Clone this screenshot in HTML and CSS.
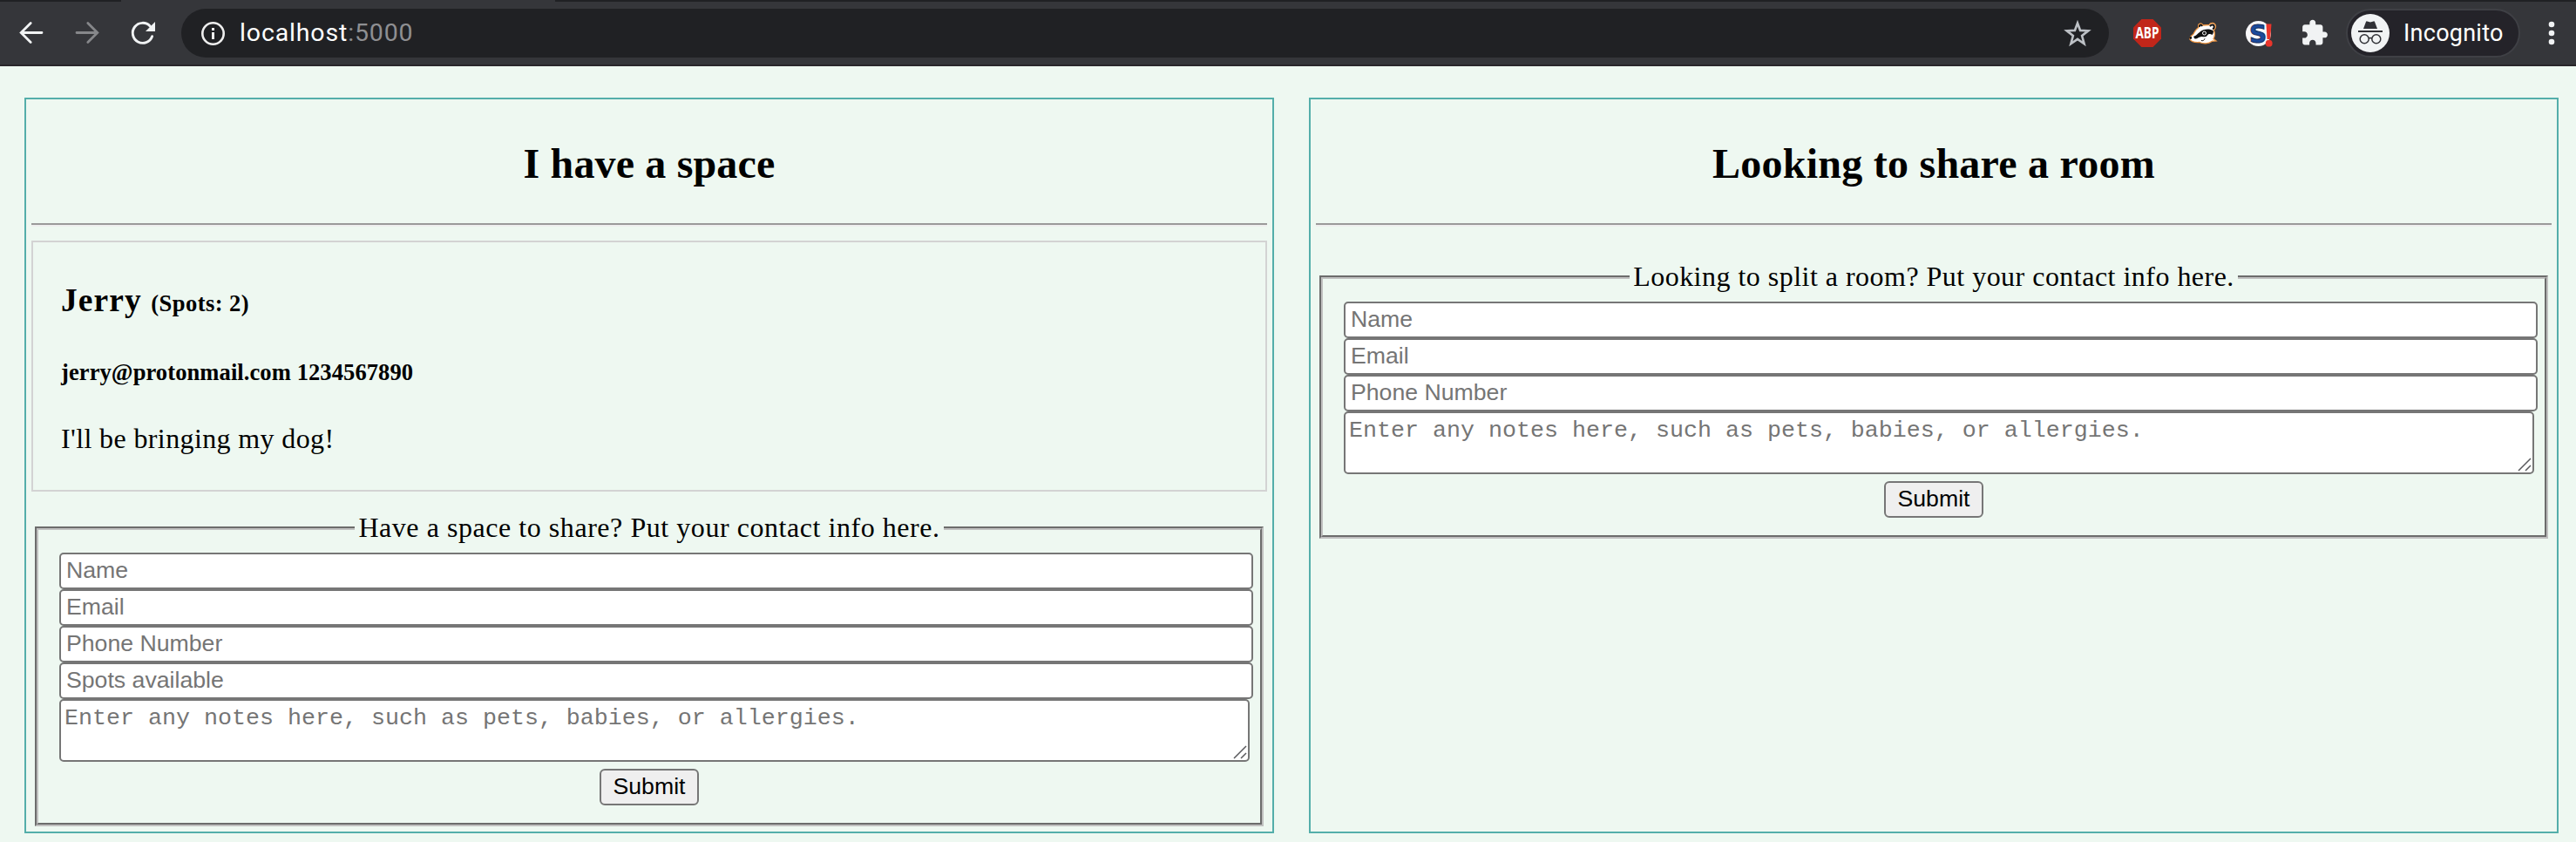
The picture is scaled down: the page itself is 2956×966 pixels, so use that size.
FILE: index.html
```html
<!DOCTYPE html>
<html lang="en">
<head>
<meta charset="utf-8">
<title>Room share</title>
<link rel="stylesheet" href="styles.css">
</head>
<body>
<header class="browser">
  <div class="tabstrip"><span class="tab-active"></span></div>
  <div class="toolbar">
    <nav class="nav">
      <svg class="icon" viewBox="0 0 32 32"><path d="M28 15.5H4.5M15.2 4.5 4.2 15.5l11 11" fill="none" stroke="#f1f3f4" stroke-width="2.8" stroke-linecap="round"/></svg>
      <svg class="icon" viewBox="0 0 32 32"><path d="M4 15.5h23.5M16.8 4.5l11 11-11 11" fill="none" stroke="#86878a" stroke-width="2.8" stroke-linecap="round"/></svg>
      <svg class="icon" viewBox="0 0 32 32"><path d="M26.6 19.7A11.5 11.5 0 1 1 24.2 8" fill="none" stroke="#f1f3f4" stroke-width="2.9" stroke-linecap="round"/><path d="M30 3v11H19z" fill="#f1f3f4"/></svg>
    </nav>
    <div class="omnibox">
      <svg class="icon" viewBox="0 0 32 32"><circle cx="16.500" cy="16.500" r="12.200" fill="none" stroke="#eeeeee" stroke-width="2.600"/><path d="M15 10h3v3h-3zM15 15h3v8h-3z" fill="#eeeeee"/></svg>
      <span class="url"><span class="host">localhost</span><span class="port">:5000</span></span>
      <svg class="icon star" viewBox="0 0 32 32"><path d="m16 4.500 3.100 8.400 9.200.4-7.200 5.700 2.500 9.200-7.600-5.300-7.600 5.300 2.500-9.200-7.200-5.700 9.200-.4z" fill="none" stroke="#bdc1c6" stroke-width="2.600"/></svg>
    </div>
    <div class="extensions">
      <svg class="icon" viewBox="0 0 32 32"><path d="M9.400 0h13.200L32 9.400v13.200L22.600 32H9.400L0 22.600V9.400z" fill="#c1261a"/><text x="16" y="22" class="abp" text-anchor="middle" textLength="27" lengthAdjust="spacingAndGlyphs">ABP</text></svg>
      <svg class="icon" viewBox="0 0 32 32">
        <path d="M11 9.500C9.500 5 13.500 3.500 16 7l7-.5c2-3 6.500-2.500 7.300.5.600 2.300-.8 4.500-2 5.500 1.500 3.500 1.300 7-.3 10l3 2.500-4.500.2C22 28.500 16 28.500 12 26.500 7 26.800 2.500 26 1 23.300c-1-2.800 2-4.600 3.800-6 1.700-3.300 3.200-6 6.200-7.800z" fill="#fff" stroke="#ee9440" stroke-width="1.300"/>
        <path d="M12 8.800c-.3-2.800 2-2.800 3-.6M24 8.300c1.700-2.800 4.800-2 4.800.4 0 1.400-1 2.300-1.800 2.600" fill="none" stroke="#111" stroke-width="2"/>
        <path d="M5 20c4.500-1.500 7-6.500 11.500-7.800 4.500-1.200 8.500-.6 11.300 1 .3 2-.3 3.600-1.300 4.800-2-1.400-4-1.500-5.500.5-2 2.700-4.500 1.700-6.500 1.500-3.500 0-5 3-8 2.500z" fill="#111"/>
        <circle cx="1.800" cy="21.500" r="1.400" fill="#111"/>
        <circle cx="17.500" cy="16" r="2" fill="#111" stroke="#fff" stroke-width="1"/>
        <path d="M14 24.500c1.800.7 3.500-.3 4-2.200" fill="none" stroke="#111"/>
      </svg>
      <svg class="icon" viewBox="0 0 32 32"><circle cx="15.500" cy="16.500" r="14.500" fill="#f8f8fa"/><text x="15" y="26.500" class="s-mark" text-anchor="middle">S</text><path d="M24.500 5.500h6l-1.300 17.500h-3.700z" fill="#e9352b"/><circle cx="27.700" cy="27.700" r="3.900" fill="#e9352b"/></svg>
      <svg class="icon" viewBox="0 0 32 32"><path transform="translate(-.6 -.6) scale(1.370)" d="M20.500 11H19V7c0-1.100-.9-2-2-2h-4V3.500C13 2.120 11.880 1 10.500 1S8 2.120 8 3.500V5H4c-1.100 0-1.990.9-1.990 2v3.800H3.500c1.490 0 2.700 1.210 2.700 2.700s-1.210 2.700-2.700 2.700H2V20c0 1.100.9 2 2 2h3.800v-1.500c0-1.490 1.210-2.700 2.700-2.700 1.490 0 2.700 1.210 2.700 2.700V22H17c1.100 0 2-.9 2-2v-4h1.500c1.380 0 2.500-1.120 2.500-2.500S21.880 11 20.500 11z" fill="#f1f3f4"/></svg>
    </div>
    <div class="profile">
      <svg class="avatar" viewBox="0 0 44 44"><circle cx="22" cy="22" r="22" fill="#f1f3f4"/><path d="M8 19h28v2H8zM14 17l3-8q.4-1 1.400-.6l3.600 1 3.600-1q1-.4 1.400.6l3 8z" fill="#303136"/><g fill="none" stroke="#303136" stroke-width="1.500"><circle cx="15.200" cy="28.700" r="5"/><circle cx="28.800" cy="28.700" r="5"/><path d="M20.200 28q1.800-1 3.600 0"/></g></svg>
      <span class="profile-name">Incognito</span>
    </div>
    <svg class="icon menu" viewBox="0 0 32 32"><g fill="#f1f3f4"><circle cx="16" cy="6" r="3.300"/><circle cx="16" cy="16" r="3.300"/><circle cx="16" cy="26" r="3.300"/></g></svg>
  </div>
</header>

<main class="board">
  <section class="panel">
    <h2 class="panel-title">I have a space</h2>
    <hr class="rule">
    <article class="card">
      <h3 class="card-name">Jerry <span class="spots">(Spots: 2)</span></h3>
      <h5 class="card-contact">jerry@protonmail.com 1234567890</h5>
      <p class="card-note">I'll be bringing my dog!</p>
    </article>
    <fieldset class="form form-space">
      <legend class="legend legend-space">Have a space to share? Put your contact info here.</legend>
      <div class="fields">
        <input class="field" type="text" placeholder="Name">
        <input class="field" type="text" placeholder="Email">
        <input class="field" type="text" placeholder="Phone Number">
        <input class="field" type="text" placeholder="Spots available">
        <div class="notes-wrap">
          <textarea class="notes" placeholder="Enter any notes here, such as pets, babies, or allergies."></textarea>
          <svg class="grip" viewBox="0 0 16 16"><path d="M1 15 15 1M9 15l6-6" fill="none" stroke="#58595c" stroke-width="1.500"/></svg>
        </div>
      </div>
      <div class="actions"><button class="submit" type="button">Submit</button></div>
    </fieldset>
  </section>

  <section class="panel">
    <h2 class="panel-title title-room">Looking to share a room</h2>
    <hr class="rule">
    <fieldset class="form form-room">
      <legend class="legend legend-room">Looking to split a room? Put your contact info here.</legend>
      <div class="fields">
        <input class="field" type="text" placeholder="Name">
        <input class="field" type="text" placeholder="Email">
        <input class="field" type="text" placeholder="Phone Number">
        <div class="notes-wrap">
          <textarea class="notes" placeholder="Enter any notes here, such as pets, babies, or allergies."></textarea>
          <svg class="grip" viewBox="0 0 16 16"><path d="M1 15 15 1M9 15l6-6" fill="none" stroke="#58595c" stroke-width="1.500"/></svg>
        </div>
      </div>
      <div class="actions"><button class="submit" type="button">Submit</button></div>
    </fieldset>
  </section>
</main>
</body>
</html>
```
FILE: styles.css
```css
* { box-sizing: border-box; }

body {
  margin: 0;
  height: 966px;
  overflow: hidden;
  background: #eef8f1;
  color: #000;
  font-family: "Liberation Serif", "Times New Roman", serif;
  font-size: 32px;
}

/* Browser chrome */
.browser {
  height: 76px;
  background: #35363a;
  border-bottom: 2px solid #29262a;
  font-family: Roboto, sans-serif;
}
.tabstrip { height: 2px; background: #202124; display: flex; }
.tab-active { width: 498px; margin-left: 139px; background: #35363a; }
.toolbar {
  height: 72px;
  display: flex;
  align-items: center;
  padding: 0 12px 0 20px;
}
.icon { width: 32px; height: 32px; display: block; flex: none; overflow: visible; }
.nav { display: flex; gap: 32px; }
.omnibox {
  flex: 1;
  height: 56px;
  margin: 0 28px;
  padding: 0 20px;
  border-radius: 28px;
  background: #202124;
  display: flex;
  align-items: center;
}
.url { margin-left: 15px; font-size: 28.5px; line-height: 36px; letter-spacing: .85px; color: #fff; }
.port { color: #8e8f92; }
.star { margin-left: auto; }
.extensions { display: flex; gap: 32px; }
.abp { font: 700 17px/1 "Open Sans", sans-serif; fill: #fff; }
.s-mark { font: 700 28px/1 "DejaVu Sans", sans-serif; fill: #1c4a9c; stroke: #16305f; stroke-width: 1; }
.profile {
  width: 200px;
  height: 56px;
  margin: 0 20px;
  padding-left: 4px;
  border: 2px solid #3f4045;
  border-radius: 28px;
  background: #242329;
  display: flex;
  align-items: center;
}
.avatar { width: 44px; height: 44px; flex: none; }
.profile-name { margin-left: 16px; font-size: 27px; letter-spacing: .25px; color: #fff; }

/* Page */
.board {
  display: grid;
  grid-template-columns: 1fr 1fr;
  gap: 40px;
  height: 890px;
  padding: 36px 20px 10px 28px;
}
.panel { border: 2px solid #54aeaa; padding: 6px; }
.panel-title {
  margin: 40px 0;
  font-size: 48px;
  line-height: 56px;
  letter-spacing: .15px;
  text-align: center;
}
.title-room { letter-spacing: .25px; }
.rule {
  height: 4px;
  margin: 0;
  border: 0;
  border-top: 2px solid #9a9a9a;
  border-bottom: 2px solid #eee;
}
.card {
  height: 288px;
  margin-top: 16px;
  padding: 45px 32px 0;
  border: 2px solid #d3d3d3;
}
.card-name { margin: 0; height: 44px; font-size: 37.44px; line-height: 44px; letter-spacing: 1.1px; }
.spots { font-size: 26.56px; line-height: 1; letter-spacing: .45px; }
.card-contact { margin: 44px 0 0; font-size: 26.56px; line-height: 32px; letter-spacing: .08px; }
.card-note { margin: 42px 0 0; line-height: 36px; letter-spacing: .38px; }

.form {
  min-width: 0;
  margin: 24px 4px 0;
  padding: 0;
  border: 4px groove #c0c0c0;
}
.form-room { margin-top: 40px; }
.legend {
  height: 36px;
  margin: 0 auto;
  padding: 0 4px;
  line-height: 34px;
  white-space: nowrap;
}
.legend-space { letter-spacing: .55px; }
.legend-room { letter-spacing: .48px; }
.fields { padding: 10px 8px 0 24px; }
.field {
  display: block;
  width: 100%;
  height: 42px;
  padding: 0 6px 2px;
  border: 2px solid #767676;
  border-radius: 5px;
  background: #fff;
  font: 26.667px "Liberation Sans", Arial, sans-serif;
}
.field::placeholder, .notes::placeholder { color: #757575; opacity: 1; }
.notes-wrap { position: relative; height: 72px; margin-right: 4px; }
.notes {
  display: block;
  width: 100%;
  height: 72px;
  padding: 5px 4px 0;
  border: 2px solid #767676;
  border-radius: 5px;
  resize: none;
  overflow: hidden;
  background: #fff;
  font: 26.667px "Liberation Mono", "Courier New", monospace;
}
.grip { position: absolute; right: 3px; bottom: 3px; width: 16px; height: 16px; }
.actions { display: flex; justify-content: center; padding: 8px 0 20px; }
.submit {
  width: 114px;
  height: 42px;
  padding: 0 0 2px;
  border: 2px solid #767676;
  border-radius: 6px;
  background: #efefef;
  color: #000;
  font: 26.667px "Liberation Sans", Arial, sans-serif;
}
```
